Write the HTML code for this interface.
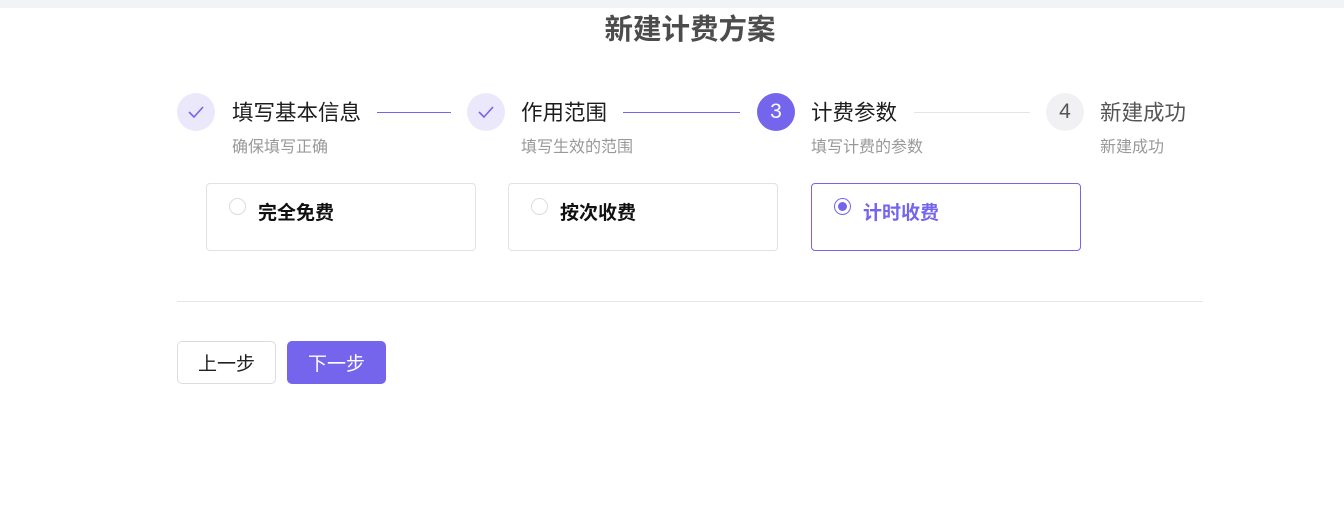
<!DOCTYPE html><html><head><meta charset="utf-8"><style>
body{margin:0;width:1344px;height:507px;background:#fff;position:relative;overflow:hidden;font-family:"Liberation Sans","Noto Sans CJK SC",sans-serif}
.a{position:absolute}
.c{position:absolute;width:38px;height:38px;border-radius:50%;top:93px;display:flex;align-items:center;justify-content:center;font-size:21px}
.t{position:absolute;top:98px;font-size:21.5px;color:#1d1d1d;line-height:30px}
.s{position:absolute;top:138px;font-size:16px;color:#999;line-height:20px}
.l{position:absolute;top:112px;height:1px}
.card{position:absolute;top:183px;width:268px;height:66px;border:1px solid #e2e2e6;border-radius:4px}
.r{position:absolute;left:22px;top:14px;width:15px;height:15px;border:1px solid #dcdce0;border-radius:50%}
.ct{position:absolute;left:51px;top:17px;font-size:19px;font-weight:bold;color:#111;line-height:26px}
.b{position:absolute;top:341px;width:97px;height:41px;border-radius:5px;font-size:19px;display:flex;align-items:center;justify-content:center}
</style></head><body>
<div class="a" style="left:0;top:0;width:1344px;height:8px;background:#f2f3f5"></div>
<div class="a" style="left:0;width:1380px;top:11px;text-align:center;font-size:28.5px;font-weight:bold;color:#4c4c4c;line-height:38px">新建计费方案</div>

<div class="c" style="left:177px;background:#ece8fc"><svg width="16" height="12" viewBox="0 0 16 12"><path d="M1 6l5 5L15 1" fill="none" stroke="#7565ec" stroke-width="1.6"/></svg></div>
<div class="t" style="left:232px">填写基本信息</div><div class="s" style="left:232px">确保填写正确</div>
<div class="l" style="left:377px;width:74px;background:#7565ec"></div>

<div class="c" style="left:467px;background:#ece8fc"><svg width="16" height="12" viewBox="0 0 16 12"><path d="M1 6l5 5L15 1" fill="none" stroke="#7565ec" stroke-width="1.6"/></svg></div>
<div class="t" style="left:521px">作用范围</div><div class="s" style="left:521px">填写生效的范围</div>
<div class="l" style="left:623px;width:117px;background:#7565ec"></div>

<div class="c" style="left:757px;background:#7565ec;color:#fff">3</div>
<div class="t" style="left:811px">计费参数</div><div class="s" style="left:811px">填写计费的参数</div>
<div class="l" style="left:914px;width:116px;background:#e4e4ea"></div>

<div class="c" style="left:1046px;background:#f1f1f3;color:#555">4</div>
<div class="t" style="left:1100px;color:#555">新建成功</div><div class="s" style="left:1100px">新建成功</div>

<div class="card" style="left:206px"><div class="r"></div><div class="ct">完全免费</div></div>
<div class="card" style="left:508px"><div class="r"></div><div class="ct">按次收费</div></div>
<div class="card" style="left:811px;border-color:#7565ec"><div class="r" style="border-color:#7565ec;width:15px;height:15px;display:flex;align-items:center;justify-content:center"><div style="width:9px;height:9px;border-radius:50%;background:#7565ec"></div></div><div class="ct" style="color:#7565ec">计时收费</div></div>

<div class="a" style="left:177px;top:301px;width:1026px;height:1px;background:#e6e6ea"></div>
<div class="b" style="left:177px;border:1px solid #dcdce0;color:#222">上一步</div>
<div class="b" style="left:287px;width:99px;height:43px;background:#7565ec;color:#fff">下一步</div>
</body></html>
